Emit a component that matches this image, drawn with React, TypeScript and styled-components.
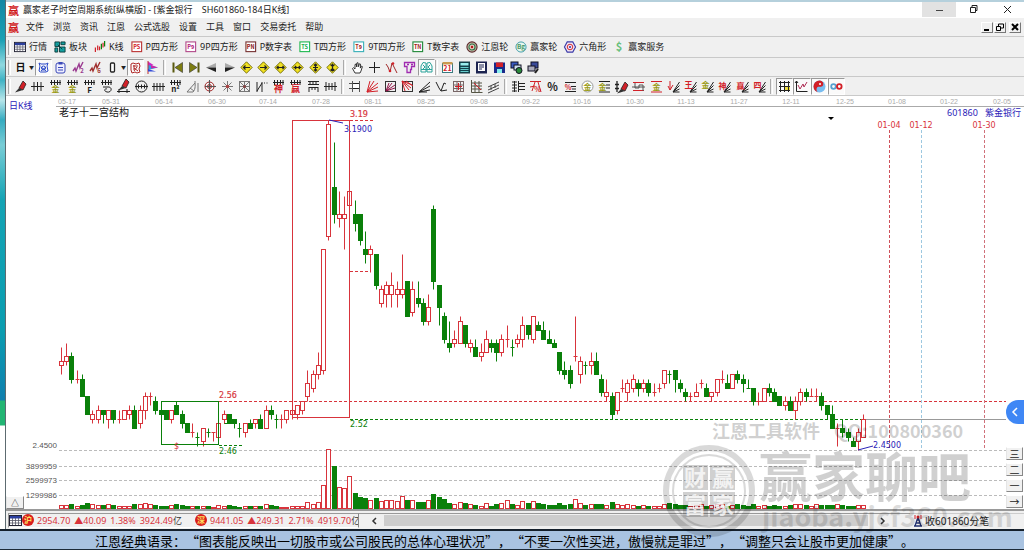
import React from 'react';
import styled, { createGlobalStyle, css } from 'styled-components';

const GlobalStyle = createGlobalStyle`
  * { box-sizing: border-box; }
  body {
    margin: 0;
    background: #fff;
    color: #222;
    font-family: "Noto Sans", "Noto Sans CJK SC", sans-serif;
    font-size: 9px;
  }
  button { font: inherit; color: inherit; padding: 0; margin: 0; border: 0; background: none; }
  svg { display: block; flex: none; }
`;

const RED = '#d8343c';
const GREEN = '#0a800a';
const NAVY = '#2a22b8';

/* ---------- layout ---------- */

const Desktop = styled.div`
  position: relative;
  display: flex;
  flex-direction: column;
  min-height: 100vh;
  overflow: hidden;
`;

const Upper = styled.div`
  display: flex;
  flex: 1;
`;

const Wallpaper = styled.div`
  flex: none;
  width: 6px;
  border-right: 1px solid #5d6b70;
  background: linear-gradient(
    #1187a4 0, #1aa0b4 40px, #8fd8e0 65px, #3fb2c4 80px, #b8e6ea 100px, #35abc0 120px,
    #79cdd6 145px, #14a3b4 200px, #0a9db0 330px, #0f7fae 400px, #22b573 401px, #22b573 425px, #fff 426px
  );
`;

const Window = styled.main`
  display: flex;
  flex: 1;
  flex-direction: column;
  min-width: 0;
  background: #f0f0f0;
  border-top: 2px solid #b5d0dc;
`;

const TitleBar = styled.header`
  display: flex;
  align-items: center;
  height: 16px;
  padding-left: 2px;
  background: #fff;
`;

const Seal = styled.span`
  width: 12px;
  color: #d01818;
  font: 700 11px/12px "Noto Sans CJK SC", sans-serif;
`;

const Title = styled.h1`
  flex: 1;
  margin: 0 0 0 3px;
  font-size: 9px;
  font-weight: 400;
  line-height: 14px;
  white-space: pre;
`;

const CaptionButton = styled.button<{ $hot?: boolean }>`
  display: grid;
  place-items: center;
  width: 34px;
  height: 15px;
  margin-bottom: 2px;
  background: ${(p) => (p.$hot ? '#e2e2e2' : 'transparent')};
`;

const MenuBar = styled.nav`
  display: flex;
  align-items: center;
  gap: 9px;
  height: 19px;
  padding: 0 3px 0 2px;
  border-bottom: 1px solid #c9c9c9;
`;

const MenuItem = styled.button`
  line-height: 14px;
  &:first-of-type { margin-left: -3px; }
`;

const MdiButtons = styled.div`
  display: flex;
  gap: 1px;
  margin-left: auto;
`;

const MdiButton = styled.button`
  display: grid;
  place-items: center;
  width: 12px;
  height: 11px;
  border: 1px solid;
  border-color: #fff #777 #777 #fff;
  &:last-child { margin-left: 2px; }
`;

const ToolBar = styled.div<{ $h: number }>`
  display: flex;
  align-items: center;
  height: ${(p) => p.$h}px;
  padding-left: 2px;
  border-bottom: 1px solid #c9c9c9;
`;

const Grip = styled.span<{ $wide?: boolean }>`
  width: 3px;
  height: 15px;
  margin: 0 ${(p) => (p.$wide ? 3 : 1)}px 0 ${(p) => (p.$wide ? 2 : 0)}px;
  border-left: 1px solid #aaa;
  border-right: 1px solid #fff;
`;

const Labelled = styled.button`
  display: flex;
  align-items: center;
  gap: 3px;
  margin-left: 2px;
  padding-right: 5px;
  line-height: 14px;
  white-space: nowrap;
`;

const Group = styled.div<{ $w: number }>`
  display: grid;
  grid-auto-flow: column;
  grid-auto-columns: 1fr;
  width: ${(p) => p.$w}px;
`;

const Tool = styled.button<{ $on?: boolean }>`
  display: grid;
  place-items: center;
  height: 17px;
  ${(p) => p.$on && css`
    background: #fafafa;
    border: 1px solid;
    border-color: #999 #fff #fff #999;
  `}
`;

const Drop = styled.button`
  width: 7px;
  font-size: 5px;
  line-height: 17px;
`;

const ChartPane = styled.section`
  display: flex;
  background: #fff;
  border-bottom: 2px solid #999;
`;

const ChartBox = styled.div`
  flex: 1;
  min-width: 0;
  > svg { overflow: visible; }
`;

const SideRail = styled.div`
  position: relative;
  display: flex;
  flex-direction: column;
  justify-content: flex-end;
  gap: 3px;
  width: 18px;
  padding-bottom: 1px;
`;

const SideButton = styled.button`
  height: 13px;
  width: 17px;
  background: #f1f1f1;
  border: 1px solid;
  border-color: #fff #888 #888 #e5e5e5;
  font-size: 10px;
  line-height: 10px;
`;

const Expand = styled(SideButton)`
  align-self: flex-end;
  margin-right: -18px;
  width: 18px;
  z-index: 1;
  font-size: 8px;
`;

const Drawer = styled.button`
  position: absolute;
  top: 304px;
  right: 0;
  display: grid;
  place-items: center;
  width: 18px;
  height: 24px;
  background: #3f87f5;
  border-radius: 12px 0 0 12px;
`;

const StatusBar = styled.footer`
  display: flex;
  align-items: center;
  height: 18px;
  padding-left: 2px;
`;

const Quotes = styled.div`
  display: flex;
  align-items: center;
  flex: none;
  width: 351px;
  height: 15px;
  overflow: hidden;
  border: 1px solid;
  border-color: #999 #888 #fff #999;
  color: ${RED};
  white-space: nowrap;
`;

const Quote = styled.span`
  display: flex;
  flex: none;
  gap: 4px;
  width: 158px;
  margin-left: 3px;
  b { color: #333; font-weight: 400; }
`;

const Scroller = styled.div`
  display: flex;
  align-items: center;
  flex: 1;
  height: 15px;
  padding-right: 17px;
  border-top: 1px solid #999;
`;

const ScrollButton = styled.button`
  display: grid;
  place-items: center;
  width: 25px;
  height: 13px;
  padding-left: 4px;
`;

const Thumb = styled.div`
  flex: 1;
  height: 11px;
  background: #cdcdcd;
`;

const Tick = styled.div`
  display: flex;
  align-items: center;
  gap: 3px;
  width: 114px;
  height: 15px;
  border-top: 1px solid #ccc;
  padding-left: 3px;
  font-size: 10px;
`;

const Ticker = styled.p`
  margin: 0;
  height: 21px;
  padding-left: 95px;
  background: #a9c3e1;
  border-top: 2px solid #15202c;
  border-bottom: 1px solid #1c2a38;
  color: #000;
  font: 13px/20px "Noto Sans CJK SC", sans-serif;
  text-spacing-trim: space-all;
  white-space: nowrap;
`;

const Watermark = styled.div`
  position: absolute;
  right: 12px;
  bottom: 7px;
  width: 345px;
  height: 125px;
  pointer-events: none;
`;

/* ---------- icons ---------- */

const K = '#222';
const R = '#d22028';
const Y = '#9a9a10';

const Glyph = ({ c, x = 6.5, y = 12.5, s = 8, f }: { c: string; x?: number; y?: number; s?: number; f: string }) => (
  <text x={x} y={y} fontSize={s} fill={f} textAnchor="middle" fontWeight="700" fontFamily="Noto Sans CJK SC, sans-serif">{c}</text>
);
const Ln = ({ d, c = K, w = 1, f = 'none' }: { d: string; c?: string; w?: number; f?: string }) => (
  <path d={d} stroke={c} strokeWidth={w} fill={f} />
);
const comb = 'M1 2.5H12M2.5 0V5M5.5 0V5M8.5 0V5M11 0V5';
const slants = 'M6 12H12.5M6 12L12.5 2M6 12L12.5 5.5M6 12L12.5 9';
const tile = (t: string, c: string, b: string) => (
  <>
    <rect x="1" y="1" width="10.5" height="10.5" fill="#fff" stroke={b} strokeWidth="1.2" />
    <Glyph c={t} f={c} x={6.2} y={8.7} s={6} />
  </>
);
const diamond = (d: string) => (
  <>
    <path d="M6.500.8L12.200 6.500 6.500 12.200.8 6.500z" fill="#f0e020" stroke="#6b6400" strokeWidth=".9" />
    <Ln d={d} w={1.2} />
  </>
);
const pencil = (
  <>
    <path d="M5 8L9 1l3 3-3 6z" fill={R} stroke="#222" strokeWidth=".8" />
    <path d="M5 8l4 2-8 2.500z" fill="#333" />
  </>
);
const wave = (c: string, n: string) => (
  <>
    <Ln d="M1 10l2-3 1 3 3-7 1 4 3-6" c={c} w={1.4} />
    <Glyph c={n} f={c} x={10} y={12} s={6} />
  </>
);
const box = <rect x="1.500" y="1.500" width="10" height="10" fill="none" stroke="#333" />;

const icons: Record<string, React.ReactNode> = {
  table: <><rect x=".5" y="1.500" width="12" height="10" fill="#fff" stroke="#223" /><rect x="1" y="2" width="11" height="2.500" fill="#2b3fa0" /><Ln d="M1 6.500H12M1 9H12M3.500 4V11M6.500 4V11M9.500 4V11" c="#556" w={0.8} /></>,
  blocks: <><path d="M1 1h5v5H1zM7.500 1H12v3H7.500zM1 7.500h3V12H1zM6 6.500h6V12H6z" fill="#13a0a0" stroke="#0b3b3b" /><Ln d="M4 4l5 5" c="#0b3b3b" /></>,
  kline: <><Ln d="M1.500 7v5M4 5v5M6 6v4" c={R} w={1.300} /><Ln d="M8 3v6M11.500 0v6" c={GREEN} w={1.300} /><Ln d="M9.800 2v5" c={R} w={1.300} /></>,
  ps: tile('PS', R, '#b33'), p9: tile('P9', '#b01878', '#b24a8a'), pn: tile('PN', '#8a1010', '#733'),
  ts: tile('TS', '#18b050', '#20b850'), t9: tile('T9', '#a01818', '#38b0b8'), tn: tile('TN', '#a01818', '#208838'),
  wheel: <><circle cx="6.500" cy="6.500" r="5.500" fill="#c9b8a8" stroke="#5a2a2a" strokeWidth="1.200" /><circle cx="6.500" cy="6.500" r="3.300" fill="#e9c8c0" stroke="#2a7a4a" strokeWidth="1.200" /><circle cx="6.500" cy="6.500" r="1.300" fill="#b01818" /></>,
  ying: <><circle cx="6.500" cy="6.500" r="5.500" fill="#eaf6ee" stroke="#3a9aa8" /><Glyph c="Bg" f="#4a9a6a" y={9} s={7} /></>,
  hex: <><path d="M3.500 1h6l3 5.500-3 5.500h-6L.5 6.500z" fill="#f3e6f2" stroke="#3a3aa8" strokeWidth="1.200" /><circle cx="6.500" cy="6.500" r="3" fill="none" stroke={R} /><circle cx="6.500" cy="6.500" r="1.200" fill="#3a3aa8" /></>,
  dollar: <Glyph c="$" f="#69c07c" s={12} y={10.800} />,
  day: <Glyph c="日" f="#111" s={10} y={10.300} />,
  calBlue: <><Ln d="M2 2l2 1h5l2-1-1 3 1 5-2 1H3.500L2 10 3 5zM4 6l5 4M9 6l-5 4" c="#2a48c8" /><circle cx="6.500" cy="7" r="2" fill="none" stroke="#2a48c8" /></>,
  clip: <><rect x="2" y="2" width="9" height="10" rx="2" fill="#eef" stroke="#3a48b8" /><rect x="4.500" y="1" width="4" height="2.500" fill="#3a48b8" /><Ln d="M4 6.500h5M4 9h5" c="#3a48b8" /></>,
  w2: wave('#9a3a90', '2'), w6: wave('#a03030', '6'),
  zero: <rect x="4.500" y="2" width="4" height="9" rx="1" fill="#fff" stroke="#222" strokeWidth="1.300" />,
  redBox: <Ln d="M2 3l2-1 3 1 3-1 1 3-1 3 1 3-3 1-2-1-3 1-1-3zM4 5h5M5 4v5M8 6l-3 4M5 7l4 3" c="#b02828" />,
  flag: <><path d="M2 .5l5.500 3.500L2 6z" fill="#c828c8" /><path d="M2 4l10 2.500L2 9z" fill="#2fa0e0" /><path d="M5 4l7 2.500-7 1z" fill="#c828a8" /><Ln d="M2 0v13" c="#c03030" /><path d="M2 8l8 2.500H2z" fill="#2f48d8" /></>,
  first: <><path d="M11.500 1.500v10L4 6.500z" fill="#7d7d10" stroke="#333" strokeWidth=".6" /><rect x="1.500" y="1.500" width="2" height="10" fill="#5a5a10" /></>,
  last: <><path d="M1.500 1.500v10L9 6.500z" fill="#7d7d10" stroke="#333" strokeWidth=".6" /><rect x="9.500" y="1.500" width="2" height="10" fill="#5a5a10" /></>,
  prev: <><path d="M11 2v4.500H1z" fill="#aaa" /><path d="M1 6.500h10V11z" fill="#222" /></>,
  next: <><path d="M2 2v4.500h10z" fill="#aaa" /><path d="M12 6.500H2V11z" fill="#222" /></>,
  d1: diamond('M10 6.500H3.500M5.500 4.500l-2 2 2 2'), d2: diamond('M3 6.500h6.500M7.500 4.500l2 2-2 2'),
  d3: diamond('M3 6.500h7M4.500 5L3 6.500 4.500 8M8.500 5L10 6.500 8.500 8'), d4: diamond('M2.500 6.500h8M4 5l1.500 1.500L4 8M9 5L7.500 6.500 9 8'),
  d5: diamond('M6.500 3v7M5 4.500L6.500 3 8 4.500M5 8.500L6.500 10 8 8.500M4 6.500h5'), d6: diamond('M6.500 2.500v8M4.500 3.500l2 2 2-2M4.500 9.500l2-2 2 2'),
  hand: <Ln d="M4 12L1.500 7.500l1-.8L4 8V3.500l1.200-.5.600 3V2l1.200-.3.500 4L8.300 2.800l1.200.3-.2 4 1.200-2 .9.500L10 10l-1 2z" f="#fff" w={0.9} />,
  plus: <Ln d="M6.500 1v11M1 6.500h11" />,
  vline: <><Ln d="M1 3l2 3 2 5 2-9 2 4 3 6" c="#a02828" /><circle cx="5" cy="10" r="1.300" fill={R} /><circle cx="8" cy="2.500" r="1.300" fill={R} /></>,
  shirt: <Ln d="M1.500 1.500h10v4h-3v3h-1v3H4v-6H1.500zM4 3.500h2M8 3.500h2" c="#a02cb0" w={1.300} />,
  brain: <Ln d="M6 2L3 1.500 1 5v6h5zM7 2l3-.5L12 5v6H7zM3 4l2 2-2 2M10 4L8 6l2 2M1 8.500h11" c="#2ba39a" />,
  cal21: <><rect x="1.500" y="2.500" width="10" height="9" fill="#fff" stroke="#3a7a80" /><rect x="1.500" y="1" width="10" height="2.500" fill="#c99a50" /><Glyph c="21" f={R} y={10} s={7} /></>,
  calc: <><rect x="1" y=".5" width="11" height="12" fill="#12404a" /><rect x="2.500" y="2" width="8" height="2.500" fill="#9ee" /><Ln d="M2.500 6.500h8M2.500 8.500h8M2.500 10.500h8" c="#6cc" w={1} /></>,
  doc: <><rect x="1" y=".5" width="11" height="12" fill="#1c2450" /><rect x="3" y="2" width="7" height="8" fill="#fff" /><Ln d="M4 4h5M4 6h5M4 8h3" c="#1c2450" /></>,
  disk: <><rect x="1" y="1.500" width="11" height="10.500" fill="#1a2a8a" /><rect x="3" y="1.500" width="7" height="4.500" fill={R} /><rect x="4" y="8" width="5" height="4" fill="#8ee" /></>,
  net: <><rect x="1" y="1" width="7" height="6" fill="#3a5ac0" stroke="#112" /><rect x="4" y="4" width="7" height="5" fill="#cde" stroke="#112" /><circle cx="9" cy="9.500" r="3" fill="#2a8a3a" stroke="#112" /></>,
  net2: <><rect x="4" y="1" width="7" height="6" fill="#3a4a9a" stroke="#112" /><rect x="1" y="5" width="7" height="5" fill="#aab" stroke="#112" /><Ln d="M8 12l3-4" w={2} /></>,
  pencil,
  comb4: <Ln d="M0 6.500h13M3 2v9M6.500 2v9M10 2v9" />,
  combGold: <><Ln d={comb} /><Glyph c="金" f={Y} y={12} /></>,
  combF: <><Ln d={comb} /><Glyph c="F" f={K} /></>,
  combS: <><Ln d={comb} /><Ln d="M3 7h6M9 7c4 1 2 6-2 5s-2-4 0-3" /></>,
  combPen: <>{<g transform="translate(0,-2)">{pencil}</g>}<Ln d="M0 11.500h13M2 9v4M10 9v4" /></>,
  circ: <><circle cx="6.500" cy="6.500" r="5.500" fill="none" stroke={K} /><Ln d="M0 6.500h13M3.500 4.500v4M6.500 4.500v4M9.500 4.500v4" /></>,
  comb5: <Ln d="M0 6.500h13M2 3v8M5 3v8M8 3v8M11 3v8" />,
  n2: <><Ln d={comb} /><Glyph c="n²" f={K} y={12} s={8} /></>,
  angle: <Ln d="M1 12l8-9M1 12h6c3-3 2-8 2-11M12 3v9M4 8l4 3" c="#777" />,
  spiral: <><circle cx="6.500" cy="6.500" r="4.500" fill="none" stroke="#a02020" /><circle cx="6.500" cy="6.500" r="2" fill="none" stroke="#a02020" /><Ln d="M6.500 0v13M2 6.500h11" c="#555" /></>,
  star: <><Ln d="M6.500 1v11M1 6.500h11M2.500 2.500l8 8M10.500 2.500l-8 8" c="#777" /><circle cx="6.500" cy="6.500" r="1.800" fill="#a44" /></>,
  starBox: <>{<rect x="1.500" y="1.500" width="10" height="10" fill="none" stroke="#777" />}<Ln d="M1 1l11 11M12 1L1 12M6.500 1v11M1 6.500h11" c="#777" /><circle cx="6.500" cy="6.500" r="1.500" fill="#844" /></>,
  n: <Ln d="M2 2v10M2 11L7 3M7 2v10M9 3h1M11.500 3h1" />,
  shen: <><Ln d={comb} /><Glyph c="神" f={R} s={9} y={12} /></>,
  yingR: <><Ln d={comb} /><Glyph c="赢" f={R} s={9} y={12} /></>,
  ladder: <Ln d="M1 1.500h11M1 4.500h11M3 1v4M6 1v4M9 1v4M2 7.500h9M2 7v5M5 7v3M8 7v3M11 7v5" />,
  width: <Ln d="M2 2v9M5 3v7M11 2v9M8 3v7M0 6.500h13" />,
  rects: <><rect x="3.500" y="3.500" width="7" height="5" fill="#fff" stroke={K} /><Ln d="M3.500 1v11M10.500 1v11M0 3.500h3M0 8.500h3" c="#555" /></>,
  fanR: <Ln d="M1 12L4 1M1 12L8 1M1 12L12 3M1 12L12 7M1 12L12 11" c={R} />,
  fanBox: <>{box}<Ln d="M2 11L5 3M2 11l6-8M2 11l9-6M2 11l9-3" c="#93184a" /></>,
  fanBox2: <>{box}<Ln d="M1 1l10 4M1 1l9 7M1 1l7 9M1 1l3 10M5 1l7 5" c={R} /></>,
  fanK: <Ln d="M1 12L12 2M1 12L12 6M1 12L12 10M1 12h8" />,
  vee: <Ln d="M1 2l3 6 2 3 3-8M6 11l6-1M9 3l2 1" />,
  gridR: <><Ln d="M1.500 1v11M5 1v11M8.500 1v11M11.500 1v11M1 1.500h11M1 5h11M1 8.500h11M1 11.500h11" c="#766" /><Ln d="M3 6.500h7M6.500 3v7" c={R} /></>,
  gridR2: <><Ln d="M1.500 0v12.500h11M1 3h11M1 6h11M1 9h11M5 1v11M9 1v11" c="#554" /><Ln d="M4 3l7 7" c={R} /></>,
  parallel: <Ln d="M1 7l11-5M1 10l11-5M1 13l11-5M4 6v4M8 4v4" c="#444" />,
  ruler: <Ln d="M2.500 1v11M6.500 1v11M0 2h5M0 5h5M0 8h5M0 11h5M6 3.500h7M6 6.500h7M6 9.500h7" />,
  bridge: <><Ln d="M1 1.500h11M3 11l3-9M1 7l5-1M9 2l3 10" c={R} /><Glyph c="%" f={R} s={7} x={8.500} y={12} /></>,
  pct: <Glyph c="%" f={K} s={11} y={10.500} />,
  pctLines: <><Ln d="M1 2.500h11M7 6.500h5M1 11.500h11M8 9h4" /><Glyph c="%" f={R} s={7} x={4} y={9.500} /></>,
  goldCoin: <><circle cx="6.500" cy="6.500" r="5.500" fill="#fff" stroke="#999" /><Glyph c="金" f={Y} s={8} y={9.600} /></>,
  goldLines: <><Ln d="M1 1.500h11M8 5h4M8 8h4M1 12h11" /><Glyph c="金" f={Y} s={8} x={4.500} y={10} /></>,
  penBar: <><Ln d="M2 1v11M0 4.500h4M0 8.500h4" w={1.300} />{<g transform="translate(1,1)">{pencil}</g>}</>,
  redCross: <><Ln d="M1 2.500h11M1 10.500h11" c={R} /><Ln d="M3 3v5h4V5h4v6M0 7h13" c="#555" /></>,
  goldRed: <><Ln d="M1 1.500h11M1 12h11" c={R} /><Glyph c="金" f={Y} s={8} y={10} /></>,
  arrowFan: <><Ln d={slants} /><Ln d="M3 1v9M1 6l2 4 3-5" c={R} /></>,
  f1: <><Ln d={slants} /><Glyph c="王" f={R} x={4.500} y={8} /></>,
  f2: <><Ln d={slants} /><Glyph c="金" f={Y} x={4.500} y={8} /></>,
  f3: <><Ln d={slants} /><Glyph c="神" f={R} x={4.500} y={8.500} /></>,
  f4: <><Ln d={slants} /><Glyph c="赢" f={R} x={4.500} y={8.500} /></>,
  f5: <><Ln d={slants} /><Glyph c="四" f={R} x={4.500} y={8} /></>,
  cross: <><rect x="7" y="6" width="5" height="5" fill="#f0e040" /><Ln d="M1 2.500h11M1 6.500h11M1 10.500h11M2.500 1v11M6.500 1v11M10.500 1v11" /></>,
  axis: <><Ln d="M1.500 1v10.500H12.500M0 3l1.500-2L3 3" /><Ln d="M3 5l2 4 3-5 1 3 3-5" c="#b03058" /></>,
  yinyang: <><circle cx="6.500" cy="6.500" r="6" fill="#78bdf0" /><path d="M6.500.5a6 6 0 100 12 3 3 0 010-6 3 3 0 000-6z" fill={R} /><circle cx="7.500" cy="4" r="2.800" fill={R} /><circle cx="7" cy="4" r="1" fill="#fff" /></>,
  inf: <><circle cx="3.500" cy="6.500" r="2.300" fill="none" stroke="#58a0d0" strokeWidth="1.800" /><circle cx="9.300" cy="6.500" r="2.300" fill="none" stroke={R} strokeWidth="1.800" /></>,
};

const Icon = ({ n, size = 13 }: { n: string; size?: number }) => (
  <svg width={size} height={size} viewBox="0 0 13 13" overflow="visible" aria-hidden="true">{icons[n]}</svg>
);

const Tools = ({ w, names, on = [] }: { w: number; names: string; on?: string[] }) => (
  <Group $w={w}>
    {names.split(' ').map((n, i) => (
      <Tool key={i} $on={on.includes(n)} aria-label={n}><Icon n={n} /></Tool>
    ))}
  </Group>
);

/* ---------- chart data ---------- */

// Each entry: colour, body top, body bottom, high, low, volume bar height.
// Prices are counted in cents above 2.45.
const candles = `
r20,19,23,17,3 r21,20,24,19,3 g21,16,22,15,4 r16,16,18,15,2 g16,12,17,12,3 g12,8,12,8,5 r8,7,9,6,4 r9,7,10,6,3
g9,8,9,6,3 r9,7,9,5,4 g9,7,9,6,3 r7,7,9,6,2 r9,7,9,7,2 r9,8,10,7,2 g9,5,10,5,4 r9,6,10,5,4 r12,9,13,7,5
r12,12,13,10,4 g11,9,12,8,3 g9,8,11,8,2 g9,7,9,7,2 r9,7,9,6,3 g10,8,11,8,4 g8,6,9,5,3 g6,4,6,4,2 r4,4,6,3,2
g3,3,4,1,2 r5,2,5,1,2 g4,4,5,3,2 r4,4,4,2,1 r6,3,6,3,3 r8,7,9,6,2 g8,6,8,6,3 g7,6,7,5,2 g5,5,6,3,1 r6,4,6,3,2
g6,5,7,5,2 r7,6,7,5,2 g7,5,8,5,2 r9,5,10,5,4 g9,8,10,7,3 g7,7,8,5,2 r7,7,8,5,1 r9,7,9,6,1 r9,8,9,7,2
r10,8,10,7,2 r11,9,11,8,2 r15,12,18,11,6 r17,14,18,13,4 r19,17,22,16,6 r45,18,45,17,23 r73,48,74,47,59
g59,53,69,51,42 r53,52,58,50,21 r53,52,57,45,20 r58,55,58,55,32 g53,51,56,49,15 g53,47,53,46,11 g45,44,49,42,10
r45,44,46,40,8 g44,37,44,36,10 r36,33,37,32,7 r37,35,38,32,8 r37,35,40,32,8 r36,35,38,32,7 r36,35,44,34,12
g38,30,38,30,8 r36,31,38,30,8 g34,33,38,32,6 g33,29,34,28,6 r32,29,35,28,8 g54,38,55,36,14 g37,32,37,28,11
g30,25,31,24,9 g24,23,29,22,5 r25,24,27,23,4 r29,24,30,24,6 g28,24,28,23,5 r24,23,25,22,4 g23,21,25,21,3
r22,21,24,20,2 r25,22,27,22,5 g24,23,25,22,2 g24,22,25,20,4 r25,22,26,21,5 r25,25,28,23,8 g23,23,25,21,4
r25,24,26,23,3 r28,25,30,23,7 g28,26,28,25,5 r30,25,30,24,7 g28,27,29,27,5 g27,25,29,25,4 g25,24,27,24,3
g24,23,25,23,3 g22,18,22,17,5 g18,17,20,16,3 g18,15,19,14,4 r21,21,30,20,9 r20,17,21,15,5 g19,19,20,17,3
r20,19,22,17,4 g20,17,22,17,4 g16,13,17,12,4 r13,12,16,11,3 g12,8,13,7,6 r13,9,13,8,4 r14,14,16,13,3
r15,13,16,11,4 r16,14,17,13,3 g15,14,16,12,2 r15,14,16,13,3 g15,13,16,12,2 r13,13,15,12,2 r14,14,15,13,2
r18,15,18,14,4 g17,17,18,15,5 g18,16,18,13,4 g15,14,16,13,3 g13,12,14,11,3 r12,12,13,11,2 r13,12,15,12,3
r15,15,16,14,4 g14,12,15,12,2 r13,12,13,11,3 r16,13,16,12,4 r16,16,18,15,4 g15,14,17,14,2 r17,14,17,14,3
g17,16,18,15,4 g16,15,17,13,3 g14,14,16,14,2 g14,11,14,10,4 r11,11,13,10,2 r14,11,14,11,3 g14,13,15,12,2
g13,11,14,11,3 g12,10,12,10,2 r11,10,12,9,2 g11,9,12,9,3 r11,9,12,7,4 r13,11,14,10,4 g13,12,14,11,3
r12,12,14,12,2 r12,12,14,11,4 g12,10,13,9,3 g10,8,10,7,3 g8,5,10,5,3 r5,5,6,1,4 g5,4,7,3,3 g4,3,5,2,2
g2,1,3,1,2 r4,2,5,0,3 r7,3,8,3,3`
  .trim()
  .split(/\s+/)
  .map((s) => ({ up: s[0] === 'r', v: s.slice(1).split(',').map(Number) }));

const px = (cents: number) => Math.round(450 - cents * 4.46) + 0.5;

const axisDates: [string, number][] = [
  ['05-17', 67], ['05-31', 111], ['06-14', 164], ['06-30', 217], ['07-14', 268], ['07-28', 321], ['08-11', 373],
  ['08-25', 426], ['09-08', 479], ['09-22', 531], ['10-16', 582], ['10-30', 635], ['11-13', 686], ['11-27', 739],
  ['12-11', 791], ['12-25', 845], ['01-08', 897], ['01-22', 949], ['02-05', 1002],
];

const Candle = ({ i }: { i: number }) => {
  const { up, v } = candles[i];
  const [top, bottom, high, low, vol] = v;
  const x = Math.round(61 + i * 5.244) + 0.5;
  const color = up ? RED : GREEN;
  const a = px(top);
  const b = px(bottom);
  return (
    <g stroke={color} strokeWidth="1" fill={up ? '#fff' : color}>
      <path d={`M${x} ${px(high)}V${px(low)}`} />
      {top === bottom ? <path d={`M${x - 2} ${a}h4`} /> : <rect x={x - 2} y={a} width="4" height={b - a} />}
      <rect x={x - 2} y={508.5 - vol} width="4" height={vol} />
    </g>
  );
};

const Chart = () => (
  <svg width="100%" height="413" role="img" aria-label="日K线">
    <g transform="translate(-6,-96)" fontFamily="DejaVu Sans, Noto Sans CJK SC, sans-serif" fontSize="8">
      <path d="M56 106.500H2400" stroke="#aaa" />
      <g fontFamily="Liberation Sans, sans-serif" fontSize="7" fill="#aaa" textAnchor="middle">
        {axisDates.map(([t, x]) => <text key={t} x={x} y="104">{t}</text>)}
      </g>
      <g stroke="#bbb" strokeDasharray="3 2">
        {[450.5, 466.5, 480.5, 495.5].map((y) => <path key={y} d={`M59 ${y}H1006`} />)}
      </g>
      <g fontFamily="Liberation Sans, sans-serif" fontSize="8" fill="#555" textAnchor="end">
        <text x="57" y="448">2.4500</text>
        <text x="57" y="469">3899959</text>
        <text x="57" y="483">2599973</text>
        <text x="57" y="498">1299986</text>
      </g>
      <g fill="none">
        <path d="M219 401.500H1006" stroke={RED} strokeDasharray="3 2" />
        <path d="M350 419.500H870" stroke={GREEN} strokeDasharray="3 2" />
        <path d="M866 419.500H1006" stroke="#999" />
        <path d="M219 445.500H244M224 423.500H240" stroke={GREEN} strokeDasharray="3 2" />
        <path d="M350 120.500H375M350 271.500H371" stroke={RED} strokeDasharray="3 2" />
        <path d="M889.500 130V450" stroke="#d0505a" strokeDasharray="3 2" />
        <path d="M921.500 130V450" stroke="#9cc8e0" strokeDasharray="3 2" />
        <path d="M984.500 130V450" stroke="#d0707a" strokeDasharray="3 2" />
      </g>
      {candles.map((_, i) => <Candle key={i} i={i} />)}
      <rect x="161.500" y="401.500" width="57" height="43" fill="none" stroke={GREEN} />
      <rect x="292.500" y="120.500" width="57" height="297" fill="none" stroke={RED} />
      <path d="M329 120l14 3M858 450l15-4" stroke={NAVY} fill="none" />
      <path d="M828 117h6l-3 3z" fill="#000" />
      <text x="350" y="117" fill={RED} stroke={RED} strokeWidth=".2">3.19</text>
      <text x="344" y="132" fill={NAVY}>3.1900</text>
      <text x="219" y="398" fill={RED} stroke={RED} strokeWidth=".2">2.56</text>
      <text x="219" y="454" fill={GREEN}>2.46</text>
      <text x="350" y="427" fill={GREEN}>2.52</text>
      <text x="873" y="448" fill={NAVY}>2.4500</text>
      <text x="174" y="449" fill={RED}>$</text>
      <g fill={RED} textAnchor="middle">
        <text x="889" y="128">01-04</text>
        <text x="921" y="128">01-12</text>
        <text x="984" y="128">01-30</text>
      </g>
      <g fontFamily="Noto Sans, Noto Sans CJK SC, sans-serif">
        <text x="9" y="109" fontSize="9" fill={NAVY}>日K线</text>
        <text x="59" y="116" fontSize="10" fill="#111">老子十二宫结构</text>
        <text x="947" y="116" fontSize="9" fill={NAVY}>601860</text>
        <text x="985" y="116" fontSize="9" fill={NAVY}>紫金银行</text>
      </g>
    </g>
  </svg>
);

/* ---------- page ---------- */

const menus = ['文件', '浏览', '资讯', '江恩', '公式选股', '设置', '工具', '窗口', '交易委托', '帮助'];

const views: [string, string][] = [
  ['table', '行情'], ['blocks', '板块'], ['kline', 'K线'], ['ps', 'P四方形'], ['p9', '9P四方形'], ['pn', 'P数字表'],
  ['ts', 'T四方形'], ['t9', '9T四方形'], ['tn', 'T数字表'], ['wheel', '江恩轮'], ['ying', '赢家轮'], ['hex', '六角形'],
  ['dollar', '赢家服务'],
];

const Badge = ({ c }: { c: string }) => (
  <svg width="12" height="12" viewBox="0 0 12 12" aria-hidden="true">
    <circle cx="6" cy="6" r="6" fill="#d81c1c" />
    <text x="6" y="9" fontSize="8" fontWeight="700" fill="#ffe060" textAnchor="middle" fontFamily="Noto Sans CJK SC, sans-serif">{c}</text>
  </svg>
);

const IndexQuote = ({ parts }: { parts: string[] }) => (
  <Quote>
    {parts.map((p, i) => (
      <span key={p}>{p}{i === parts.length - 1 && <b>亿</b>}</span>
    ))}
  </Quote>
);

export default function App() {
  return (
    <Desktop>
      <GlobalStyle />
      <Upper>
        <Wallpaper />
        <Window>
          <TitleBar>
            <Seal>赢</Seal>
            <Title>{'赢家老子时空周期系统[纵横版] - [紫金银行    SH601860-184日K线]'}</Title>
            <CaptionButton $hot aria-label="最小化">
              <svg width="9" height="9"><path d="M1 5.500h7" stroke="#444" /></svg>
            </CaptionButton>
            <CaptionButton aria-label="还原">
              <svg width="9" height="9"><path d="M1.500 2.500h5v5h-5zM3 2V.5h5v5H7" fill="none" stroke="#222" /></svg>
            </CaptionButton>
            <CaptionButton aria-label="关闭">
              <svg width="9" height="9"><path d="M1 1l7 7M8 1L1 8" stroke="#222" /></svg>
            </CaptionButton>
          </TitleBar>
          <MenuBar>
            <Seal>赢</Seal>
            {menus.map((m) => <MenuItem key={m}>{m}</MenuItem>)}
            <MdiButtons>
              <MdiButton aria-label="最小化窗口"><svg width="8" height="8"><path d="M1 7h5" stroke="#000" strokeWidth="2" /></svg></MdiButton>
              <MdiButton aria-label="还原窗口"><svg width="8" height="8"><path d="M.5 3.500h4v4h-4zM2.500 3V1h5v4H5" fill="none" stroke="#000" /></svg></MdiButton>
              <MdiButton aria-label="关闭窗口"><svg width="8" height="8"><path d="M1 1l6 6M7 1L1 7" stroke="#000" strokeWidth="2" /></svg></MdiButton>
            </MdiButtons>
          </MenuBar>
          <ToolBar $h={21}>
            <Grip />
            {views.map(([n, t]) => (
              <Labelled key={n}><Icon n={n} size={12} />{t}</Labelled>
            ))}
          </ToolBar>
          <ToolBar $h={19}>
            <Grip />
            <Tools w={16} names="day" />
            <Drop aria-label="周期">▼</Drop>
            <Tools w={69} names="calBlue clip w2 w6" on={['calBlue']} />
            <Tools w={16} names="zero" />
            <Drop aria-label="线型">▼</Drop>
            <Tools w={34} names="redBox flag" on={['redBox']} />
            <Grip $wide />
            <Tools w={172} names="first last prev next d1 d2 d3 d4 d5 d6" />
            <Grip $wide />
            <Tools w={86} names="hand plus vline shirt brain" on={['brain']} />
            <Grip />
            <Tools w={103} names="cal21 calc doc disk net net2" />
          </ToolBar>
          <ToolBar $h={19}>
            <Grip />
            <Tools w={327} names="pencil comb4 combGold combGold combF combS combPen circ comb5 n2 angle spiral star starBox n shen yingR ladder width" />
            <Grip $wide />
            <Tools w={155} names="rects fanR fanBox fanBox2 fanK vee gridR gridR2 parallel" />
            <Grip $wide />
            <Tools w={258} names="ruler bridge pct pctLines goldCoin goldLines penBar redCross goldRed arrowFan f1 f2 f3 f4 f5" />
            <Grip $wide />
            <Tools w={69} names="cross axis yinyang inf" on={['cross', 'axis', 'yinyang', 'inf']} />
          </ToolBar>
          <ChartPane>
            <Expand aria-label="展开">△</Expand>
            <ChartBox><Chart /></ChartBox>
            <SideRail>
              <Drawer aria-label="打开侧栏">
                <svg width="8" height="10"><path d="M6 1L2 5l4 4" fill="none" stroke="#fff" strokeWidth="1.500" /></svg>
              </Drawer>
              {['三', '二', '一', '→'].map((t) => <SideButton key={t}>{t}</SideButton>)}
            </SideRail>
          </ChartPane>
          <StatusBar>
            <Quotes>
              <Icon n="table" />
              <Badge c="沪" />
              <IndexQuote parts={['2954.70', '▲40.09', '1.38%', '3924.49']} />
              <Badge c="深" />
              <IndexQuote parts={['9441.05', '▲249.31', '2.71%', '4919.70']} />
            </Quotes>
            <Scroller>
              <ScrollButton aria-label="向左"><svg width="6" height="8"><path d="M5 1L2 4l3 3" fill="none" stroke="#333" strokeWidth="1.500" /></svg></ScrollButton>
              <Thumb />
              <ScrollButton aria-label="向右"><svg width="6" height="8"><path d="M1 1l3 3-3 3" fill="none" stroke="#333" strokeWidth="1.500" /></svg></ScrollButton>
            </Scroller>
            <Tick>
              <svg width="9" height="13" aria-hidden="true">
                <path d="M5 3L2 12M5 3l3 9M3 9h4M1 12h8M4 6h2" stroke="#1f2f70" fill="none" strokeWidth="1.300" />
                <path d="M2 1v4M8 1v4" stroke={R} />
                <circle cx="5" cy="3" r="1.500" fill={R} />
              </svg>
              收601860分笔
            </Tick>
          </StatusBar>
        </Window>
      </Upper>
      <Ticker>江恩经典语录：“图表能反映出一切股市或公司股民的总体心理状况”，“不要一次性买进，傲慢就是罪过”，“调整只会让股市更加健康”。</Ticker>
      <Watermark>
        <svg width="345" height="125" overflow="visible" fontFamily="Noto Sans CJK SC, sans-serif" fontWeight="700">
          <g fill="#000" opacity=".18">
            <text x="45" y="20" fontSize="18">江恩工具软件</text>
            <text x="167" y="20" fontSize="18">QQ:100800360</text>
            <text x="92" y="79" fontSize="53">赢家聊吧</text>
            <text x="95" y="109" fontSize="27" opacity=".7">jiaoba.yjcf360.com</text>
            <circle cx="42" cy="73" r="43" fill="none" stroke="#000" strokeWidth="6" opacity=".8" />
            <circle cx="42" cy="73" r="36" fill="none" stroke="#000" strokeWidth="2" opacity=".8" />
            <path d="M16 47h25v25H16zM43 47h25v25H43zM16 74h25v25H16zM43 74h25v25H43z" />
          </g>
          <g fill="#fff" opacity=".75" fontSize="22" textAnchor="middle">
            <text x="28" y="68">财</text>
            <text x="56" y="68">赢</text>
            <text x="28" y="95">富</text>
            <text x="56" y="95">家</text>
          </g>
        </svg>
      </Watermark>
    </Desktop>
  );
}
